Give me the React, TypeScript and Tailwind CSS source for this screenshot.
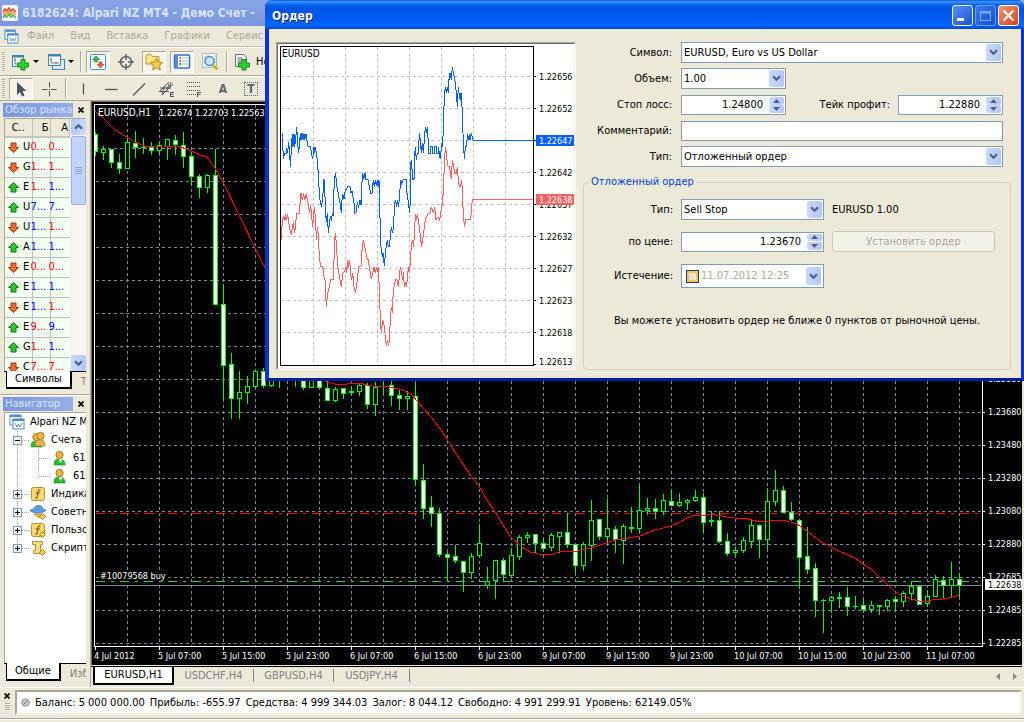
import React from "react";

const UI = "font-['DejaVu_Sans_Condensed','DejaVu_Sans',sans-serif]";
const CHART_FONT = "'DejaVu Sans Condensed', 'DejaVu Sans', sans-serif";

/* [high, body top, body bottom, low, kind]; u = rising, d = falling, n = flat */
type Candle = [number, number, number, number, "u" | "d" | "n"];

const candles: Candle[] = [
  [132, 134, 151, 156, "d"], [146, 149, 152, 160, "u"], [149, 149, 162, 168, "d"], [154, 162, 168, 174, "d"],
  [137, 142, 168, 168, "u"], [131, 143, 147, 158, "d"], [138, 147, 147, 154, "n"], [142, 147, 150, 155, "d"],
  [142, 145, 150, 154, "u"], [139, 139, 146, 160, "u"], [135, 140, 144, 155, "d"], [132, 145, 156, 168, "d"],
  [152, 156, 176, 185, "d"], [174, 176, 187, 198, "d"], [174, 175, 187, 193, "u"], [149, 175, 304, 304, "d"],
  [284, 304, 365, 400, "d"], [353, 364, 398, 419, "d"], [371, 392, 398, 419, "u"], [376, 386, 392, 404, "u"],
  [370, 371, 386, 388, "u"], [368, 371, 385, 388, "d"], [370, 376, 385, 387, "u"], [372, 376, 376, 388, "n"],
  [372, 376, 376, 382, "n"], [372, 376, 376, 387, "n"], [372, 376, 387, 390, "d"], [372, 376, 387, 387, "u"],
  [372, 376, 387, 389, "d"], [379, 388, 400, 400, "d"], [387, 389, 400, 402, "u"], [388, 388, 393, 399, "d"],
  [386, 391, 392, 396, "u"], [383, 385, 391, 396, "u"], [383, 385, 404, 409, "d"], [382, 387, 404, 416, "u"],
  [380, 386, 386, 394, "n"], [380, 385, 395, 406, "d"], [389, 395, 398, 410, "d"], [391, 396, 398, 410, "u"],
  [384, 396, 479, 486, "d"], [464, 480, 508, 519, "d"], [496, 507, 513, 527, "d"], [508, 513, 554, 557, "d"],
  [552, 554, 557, 581, "d"], [545, 556, 560, 563, "d"], [561, 561, 572, 592, "d"], [553, 556, 572, 579, "u"],
  [524, 543, 555, 558, "u"], [567, 581, 585, 589, "u"], [560, 560, 580, 599, "u"], [558, 560, 574, 582, "d"],
  [548, 555, 575, 577, "u"], [535, 537, 556, 560, "u"], [532, 535, 537, 543, "u"], [534, 534, 543, 553, "d"],
  [538, 543, 548, 551, "d"], [533, 535, 547, 551, "u"], [532, 532, 536, 553, "u"], [513, 532, 544, 548, "d"],
  [544, 544, 565, 573, "d"], [542, 544, 565, 571, "u"], [500, 520, 545, 561, "u"], [519, 519, 536, 540, "d"],
  [499, 528, 536, 542, "u"], [526, 529, 539, 553, "d"], [524, 526, 540, 564, "u"], [507, 527, 528, 533, "u"],
  [486, 510, 528, 533, "u"], [498, 508, 510, 515, "u"], [499, 508, 511, 519, "d"], [494, 500, 511, 515, "u"],
  [489, 501, 505, 506, "d"], [493, 502, 505, 507, "u"], [499, 500, 502, 510, "u"], [490, 497, 500, 502, "u"],
  [493, 497, 522, 533, "d"], [511, 520, 521, 526, "u"], [511, 520, 541, 543, "d"], [533, 541, 553, 556, "d"],
  [547, 550, 552, 555, "u"], [537, 540, 550, 553, "u"], [519, 525, 541, 548, "u"], [524, 525, 539, 558, "d"],
  [488, 501, 539, 549, "u"], [470, 490, 501, 506, "u"], [486, 490, 512, 513, "d"], [502, 512, 519, 521, "d"],
  [519, 520, 557, 589, "d"], [527, 556, 569, 574, "d"], [563, 568, 600, 617, "d"], [599, 600, 600, 633, "n"],
  [596, 597, 600, 613, "u"], [592, 597, 598, 608, "u"], [587, 597, 606, 616, "d"], [596, 606, 606, 609, "n"],
  [599, 605, 609, 613, "d"], [601, 605, 609, 613, "u"], [605, 605, 606, 615, "u"], [599, 600, 606, 611, "u"],
  [596, 599, 601, 612, "d"], [591, 593, 601, 607, "u"], [581, 586, 593, 600, "u"], [585, 586, 604, 605, "d"],
  [590, 596, 603, 607, "u"], [575, 579, 596, 597, "u"], [576, 580, 585, 599, "d"], [562, 579, 585, 598, "u"],
  [573, 579, 585, 597, "d"],
];

const average =
  "95,111 103,118 115,130 120,133 135,142 147,147 160,146 180,147 187,149 200,155 207,157 215,168 223,182 240,217 255,248 261,260 268,273 290,330 310,368 320,379 327,382 335,384 347,384 349,383 360,383 367,385 373,386 390,387 403,390 412,395 423,408 431,417 439,427 447,439 455,452 463,464 471,476 479,486 487,500 495,512 503,525 511,537 522,547 530,552 535,553 543,555 553,554 559,552 567,551 578,551 591,548 603,544 615,540 628,538 640,536 655,530 671,526 680,522 687,518 695,515 707,515 710,514 714,514 717,515 727,517 735,518 745,518 759,522 770,521 773,520 787,521 797,524 803,528 813,536 823,543 831,547 839,551 855,558 863,564 871,569 879,577 887,584 895,592 905,597 919,601 925,602 932,600 943,599 953,597 959,595";

const times = [
  "4 Jul 2012", "5 Jul 07:00", "5 Jul 15:00", "5 Jul 23:00", "6 Jul 07:00", "6 Jul 15:00", "6 Jul 23:00",
  "9 Jul 07:00", "9 Jul 15:00", "9 Jul 23:00", "10 Jul 07:00", "10 Jul 15:00", "10 Jul 23:00", "11 Jul 07:00",
];

const prices = ["1.23680", "1.23480", "1.23280", "1.23080", "1.22880", "1.22685", "1.22485", "1.22285"];

const askTicks =
  "35,280 38,280 38,320 41,358 43,340 48,342 50,325 53,340 56,305 59,340 61,380 65,310 67,282 69,320 72,282 74,320 77,300 80,260 83,310 86,340 89,300 91,282 93,300 96,280 100,300 102,282 104,300 108,282 112,310 115,320 122,320 124,340 128,358 132,320 134,340 136,320 139,340 142,360 144,390 146,430 148,450 150,480 153,495 155,500 157,480 160,450 162,418 164,460 166,480 167,520 169,545 172,520 175,580 178,550 181,530 184,538 187,522 190,525 190,480 193,430 196,400 199,420 202,450 205,460 208,480 212,500 214,520 216,480 218,462 222,478 226,450 230,450 232,440 240,440 243,460 246,452 249,470 252,490 255,520 258,515 262,490 266,500 270,480 273,495 275,440 278,400 281,418 285,400 288,418 295,420 298,440 302,460 306,460 310,420 313,440 316,420 319,438 322,420 325,440 327,420 328,480 331,560 333,620 337,650 339,640 343,678 347,630 352,600 355,620 358,620 361,590 364,560 367,580 371,560 373,500 376,480 380,500 383,480 386,500 389,460 392,420 395,430 400,418 409,418 411,460 414,480 419,520 421,480 421,380 424,360 427,400 429,418 432,418 433,360 436,320 439,360 442,340 445,340 448,280 451,300 454,340 457,310 460,340 463,300 466,260 469,280 472,260 475,310 475,340 481,340 481,320 487,320 487,340 493,340 493,320 499,320 499,340 505,340 505,320 508,340 511,358 515,310 518,320 520,260 523,170 526,140 529,160 532,140 535,160 538,100 541,100 544,120 547,80 550,100 553,110 556,130 559,160 562,200 565,140 568,170 571,180 573,160 576,200 579,280 583,358 586,320 590,318 592,282 595,300 598,282 600,300 604,282 607,290 609,301 790,301";

const bidTicks =
  "34,600 37,540 42,530 45,540 46,522 50,540 53,522 56,545 61,575 64,580 68,560 70,545 74,580 78,540 81,520 88,520 91,480 93,460 97,480 101,460 104,480 109,460 112,480 116,500 119,520 122,495 125,530 128,560 131,520 134,500 137,560 140,600 142,560 145,590 148,650 152,680 158,680 162,710 165,720 169,800 173,760 178,740 182,718 190,718 192,660 194,600 196,580 199,610 202,660 205,690 210,720 214,740 218,700 224,695 228,680 230,700 233,660 236,680 239,660 242,700 245,720 248,698 252,740 256,758 260,735 264,700 266,680 273,680 275,640 280,600 284,620 288,640 292,660 295,660 298,680 301,700 304,718 308,700 312,680 316,700 319,680 322,695 325,680 328,750 331,840 334,878 338,840 343,860 346,890 349,918 352,900 356,918 358,900 361,840 364,800 367,820 370,750 374,730 377,718 382,720 385,740 388,710 391,680 395,700 398,720 400,695 403,740 407,730 410,740 413,700 417,680 419,700 421,660 424,620 427,600 431,620 434,560 437,522 440,540 442,522 445,540 450,580 455,620 458,600 462,570 466,540 470,530 475,520 480,520 484,500 490,520 494,500 498,540 504,530 509,540 515,500 518,490 520,440 523,380 526,320 529,340 532,370 535,380 539,380 541,400 544,418 547,360 551,380 554,400 559,400 562,380 565,420 568,440 572,440 574,420 577,440 579,500 583,560 587,538 602,538 605,500 607,479 790,479";

const tickPrices: [string, number][] = [
  ["1.22656", 76], ["1.22652", 108], ["1.22642", 172], ["1.22637", 204], ["1.22632", 236],
  ["1.22627", 268], ["1.22623", 300], ["1.22618", 332], ["1.22613", 361],
];

const range = (n: number) => Array.from({ length: n }, (_, i) => i);

function PriceChart() {
  return (
    <svg className="block h-auto w-full bg-black" viewBox="91 101 931 564" shapeRendering="crispEdges" role="img" aria-label="EURUSD,H1">
      <g stroke="#778899" strokeDasharray="3 3">
        {range(27).map((i) => (
          <line key={i} x1={127.5 + i * 32} x2={127.5 + i * 32} y1={105} y2={646} />
        ))}
        {range(16).map((i) => (
          <line key={i} y1={148.5 + i * 33} y2={148.5 + i * 33} x1={96} x2={982} />
        ))}
      </g>
      <line x1={96} x2={980} y1={513.5} y2={513.5} stroke="#ff0000" strokeDasharray="9 6 3 6" />
      <line x1={96} x2={980} y1={581.5} y2={581.5} stroke="#32cd32" strokeDasharray="9 6 3 6" />
      <line x1={95} x2={982} y1={585.5} y2={585.5} stroke="#778899" />
      {candles.map(([h, t, b, l, kind], i) => {
        const x = 95 + i * 8;
        return (
          <g key={i} stroke="#00ff00">
            <line x1={x + 0.5} x2={x + 0.5} y1={h} y2={l} />
            {kind === "n" ? (
              <line x1={x - 2} x2={x + 3} y1={t + 0.5} y2={t + 0.5} />
            ) : (
              <rect x={x - 1.5} y={t + 0.5} width={4} height={b - t} fill={kind === "d" ? "#ffffff" : "#000000"} />
            )}
          </g>
        );
      })}
      <polyline points={average} fill="none" stroke="#ff0000" />
      <rect x={91} y={101} width={3} height={564} fill="#000000" />
      <path d="M982.5 104.5H94.5V646.5H982.5Z" fill="none" stroke="#ffffff" />
      <rect x={91} y={101} width={931} height={1} fill="#716f64" />
      <rect x={91} y={101} width={1} height={564} fill="#716f64" />
      <g stroke="#ffffff">
        {times.map((t, i) => (
          <line key={t} x1={95.5 + i * 64} x2={95.5 + i * 64} y1={646} y2={650} />
        ))}
        {prices.map((p, i) => (
          <line key={p} x1={982} x2={985} y1={412.5 + i * 33} y2={412.5 + i * 33} />
        ))}
      </g>
      <g fill="#ffffff" fontFamily={CHART_FONT} fontSize={9}>
        {times.map((t, i) => (
          <text key={t} x={94 + i * 64} y={659}>{t}</text>
        ))}
        {prices.map((p, i) => (
          <text key={p} x={988} y={415 + i * 33}>{p}</text>
        ))}
        <text x={988} y={382}>1.23880</text>
        <text x={98} y={116} fontSize={10}>EURUSD,H1</text>
        <text x={159} y={116}>1.22674 1.22703 1.22563</text>
        <rect x={99} y={570} width={68} height={11} fill="#000000" />
        <text x={100} y={579}>#10079568 buy</text>
        <rect x={985} y={579} width={37} height={11} />
        <text x={988} y={588} fill="#000000">1.22638</text>
      </g>
    </svg>
  );
}

function TickChart() {
  return (
    <svg className="block h-auto w-full bg-white" viewBox="278 44 296 324" shapeRendering="crispEdges" role="img" aria-label="EURUSD">
      <g stroke="#c0c0c0" strokeDasharray="3 3">
        {range(7).map((i) => (
          <line key={i} x1={313.5 + i * 32} x2={313.5 + i * 32} y1={47} y2={365} />
        ))}
        {range(9).map((i) => (
          <line key={i} y1={76.5 + i * 32} y2={76.5 + i * 32} x1={281} x2={533} />
        ))}
      </g>
      <g transform="translate(270 40) scale(0.333333)" fill="none">
        <polyline points={bidTicks} stroke="#ff6060" vectorEffect="non-scaling-stroke" />
        <polyline points={askTicks} stroke="#0060ff" vectorEffect="non-scaling-stroke" />
      </g>
      <path d="M280.5 46.5H533.5V365.5H280.5Z" fill="none" stroke="#000000" />
      {range(10).map((i) => (
        <rect key={i} x={534} y={i === 9 ? 364 : 76 + i * 32} width={2} height={1} />
      ))}
      <g fontFamily={CHART_FONT} fontSize={9}>
        <text x={282} y={57} fontSize={10}>EURUSD</text>
        {tickPrices.map(([p, y]) => (
          <text key={p} x={539} y={y + 4}>{p}</text>
        ))}
        <rect x={536} y={135} width={38} height={11} fill="#0060ff" />
        <text x={539} y={144} fill="#ffffff">1.22647</text>
        <rect x={536} y={194} width={38} height={11} fill="#ff6060" />
        <text x={539} y={203} fill="#ffffff">1.22638</text>
      </g>
    </svg>
  );
}

function Chevron() {
  return (
    <svg width="9" height="7" viewBox="0 0 9 7" aria-hidden="true">
      <path d="M1 1.2L4.5 4.7L8 1.2" fill="none" stroke="#4d6185" strokeWidth="2.2" />
    </svg>
  );
}

const arrowBox = "flex items-center justify-center rounded-[2px] bg-linear-to-r from-[#c9d8fc] to-[#b4c8f6]";

function Select({ id, value, wide }: { id: string; value: string; wide?: boolean }) {
  return (
    <div className={wide ? "relative h-[21px] w-full" : "relative h-[21px] w-[105px]"}>
      <select id={id} defaultValue={value} className="h-full w-full appearance-none rounded-none border border-[#7f9db9] bg-white pl-[2px] pr-5 outline-none">
        <option value={value}>{value}</option>
      </select>
      <span className={`${arrowBox} pointer-events-none absolute inset-y-[2px] right-[2px] w-[15px]`}>
        <Chevron />
      </span>
    </div>
  );
}

function Spin({ id, value, wide, active }: { id: string; value: string; wide?: boolean; active?: boolean }) {
  return (
    <div className={`${wide ? "w-full" : "w-[105px]"} flex h-[20px] border border-[#7f9db9] bg-white`}>
      <input id={id} defaultValue={value} className="min-w-0 flex-1 pr-[5px] text-right outline-none" />
      <div className="m-[1px] flex w-[15px] flex-col">
        <button aria-label="Больше" className={`${arrowBox} flex-1`}>
          <svg width="7" height="4" viewBox="0 0 7 4"><path d="M3.5 0L7 4H0Z" fill="#4d6185" /></svg>
        </button>
        <button aria-label="Меньше" className={`${arrowBox} flex-1 ${active ? "border-t border-white" : ""}`}>
          <svg width="7" height="4" viewBox="0 0 7 4"><path d="M3.5 4L0 0H7Z" fill="#4d6185" /></svg>
        </button>
      </div>
    </div>
  );
}

function OrderDialog() {
  const row = "grid grid-cols-[89px_1fr] items-center gap-x-[9px] pr-2";
  const winBtn = "flex size-[21px] items-center justify-center rounded-[3px] border";
  return (
    <section role="dialog" aria-label="Ордер" className="absolute left-[265px] right-0 top-0 rounded-t-[7px] border-b-[3px] border-l-[4px] border-r-[3px] border-[#0831d9] border-b-[#001ea0] bg-[#ece9d8]">
      <header className="-ml-[4px] -mr-[3px] flex h-[29px] items-center gap-[2px] rounded-t-[7px] bg-[linear-gradient(to_bottom,#0a51d8_0%,#3a93ff_6%,#0566ec_16%,#0054e3_30%,#0058ee_55%,#0166ff_88%,#0146c8_100%)] pl-[7px] pr-[5px] pt-[2px]">
        <h2 className="flex-1 text-[12px] font-bold text-white [text-shadow:1px_1px_0_#0f1e6b]">Ордер</h2>
        <button aria-label="Свернуть" className={`${winBtn} border-white bg-linear-to-br from-[#5a8df4] to-[#1c50d8]`}>
          <svg width="19" height="19"><rect x="4" y="12" width="7" height="3" fill="#fff" /></svg>
        </button>
        <button aria-label="Развернуть" disabled className={`${winBtn} border-[#6f9df5] bg-linear-to-br from-[#3a78ee] to-[#1450d8]`}>
          <svg width="19" height="19" fill="none" stroke="#7ea9f5"><rect x="4.5" y="5.5" width="10" height="9" /><path d="M4 6.5H15" strokeWidth="2" /></svg>
        </button>
        <button aria-label="Закрыть" className={`${winBtn} border-white bg-linear-to-br from-[#f0936f] to-[#d2401a]`}>
          <svg width="19" height="19"><path d="M4.5 4.5L14.5 14.5M14.5 4.5L4.5 14.5" stroke="#fff" strokeWidth="2.2" /></svg>
        </button>
      </header>
      <div className="flex items-start gap-[7px] pb-2 pl-[7px] pr-[10px] pt-[13px]">
        <div className="w-[300px] shrink-0 border border-[#aca899] border-b-white border-r-white">
          <div className="border border-[#716f64] border-b-[#f1efe2] border-r-[#f1efe2]">
            <TickChart />
          </div>
        </div>
        <form className="flex min-w-0 flex-1 flex-col" onSubmit={(e) => e.preventDefault()}>
          <div className="flex flex-col gap-[5px]">
            <div className={row}>
              <label htmlFor="symbol" className="text-right">Символ:</label>
              <Select id="symbol" value="EURUSD, Euro vs US Dollar" wide />
            </div>
            <div className={row}>
              <label htmlFor="volume" className="text-right">Объем:</label>
              <Select id="volume" value="1.00" />
            </div>
            <div className={`${row} h-[21px]`}>
              <label htmlFor="sl" className="text-right">Стоп лосс:</label>
              <div className="flex items-center">
                <Spin id="sl" value="1.24800" />
                <label htmlFor="tp" className="ml-auto mr-2">Тейк профит:</label>
                <Spin id="tp" value="1.22880" />
              </div>
            </div>
            <div className={`${row} h-[21px]`}>
              <label htmlFor="comment" className="text-right">Комментарий:</label>
              <input id="comment" className="h-[20px] w-full border border-[#7f9db9] bg-white px-1 outline-none" />
            </div>
            <div className={row}>
              <label htmlFor="kind" className="text-right">Тип:</label>
              <Select id="kind" value="Отложенный ордер" wide />
            </div>
          </div>
          <fieldset className="mt-2 h-[195px] rounded-[4px] border border-[#d0d0bf]">
            <legend className="ml-[5px] px-[2px] leading-[14px] text-[#0046d5]">Отложенный ордер</legend>
            <div className="flex flex-col pt-[10px]">
              <div className="grid grid-cols-[89px_143px_1fr] items-center gap-x-[8px]">
                <label htmlFor="pending" className="text-right">Тип:</label>
                <Select id="pending" value="Sell Stop" wide />
                <span>EURUSD 1.00</span>
              </div>
              <div className="mt-[11px] grid grid-cols-[89px_143px_1fr] items-center gap-x-[8px] pr-[15px]">
                <label htmlFor="price" className="text-right">по цене:</label>
                <Spin id="price" value="1.23670" wide active />
                <button disabled className="h-[21px] rounded-[3px] border border-[#c9c7ba] bg-[#f2f1e8] text-[#a8a490] [text-shadow:1px_1px_0_#fff]">Установить ордер</button>
              </div>
              <div className="mt-3 grid grid-cols-[89px_143px] items-center gap-x-[8px]">
                <label htmlFor="expiry" className="text-right">Истечение:</label>
                <div className="flex h-6 items-center border border-[#7f9db9] bg-white pl-1 pr-[2px]">
                  <input type="checkbox" aria-label="Включить истечение" className="size-[13px] appearance-none border border-[#1c3c6e] bg-[#e6e4da] shadow-[inset_0_0_0_2px_#f8c648]" />
                  <input id="expiry" disabled defaultValue="11.07.2012 12:25" className="ml-[2px] min-w-0 flex-1 text-[#aca899]" />
                  <button aria-label="Открыть календарь" className={`${arrowBox} h-[18px] w-[15px]`}>
                    <Chevron />
                  </button>
                </div>
              </div>
              <p className="mt-[26px] text-center leading-[14px]">Вы можете установить ордер не ближе 0 пунктов от рыночной цены.</p>
            </div>
          </fieldset>
        </form>
      </div>
    </section>
  );
}

function Windows({ size = 16 }: { size?: number }) {
  return (
    <svg width={size} height={size} viewBox="0 0 16 16" fill="none" className="shrink-0" aria-hidden="true">
      <rect x="1" y="1" width="11" height="10" fill="#fff" stroke="#4a90d0" />
      <rect x="1" y="1" width="11" height="2" fill="#4a90d0" />
      <path d="M3 7l1.5-2L6 7l1.5-2L9 6" stroke="#4a90d0" />
      <rect x="4" y="5" width="11" height="10" fill="#fff" stroke="#4a90d0" />
      <rect x="4" y="5" width="11" height="2" fill="#4a90d0" />
      <path d="M6 9l2 4 1.5-3 1.5 3 2-4" stroke="#4a90d0" />
    </svg>
  );
}

const Plus = () => <path d="M10 7.5h4v3.5h3.5v4H14v3h-4v-3H6.500v-4H10z" fill="#2fd02f" stroke="#158a1c" />;

const Caret = () => (
  <svg width="6" height="3" viewBox="0 0 6 3" aria-hidden="true"><path d="M0 0H6L3 3Z" /></svg>
);

function ToolButton({ label, pressed, caret, children }: { label: string; pressed?: boolean; caret?: boolean; children: React.ReactNode }) {
  return (
    <button
      aria-label={label}
      className={`${caret ? "w-8 gap-[2px]" : "w-6"} flex h-[22px] shrink-0 items-center justify-center border ${
        pressed ? "border-[#aca899] border-b-white border-r-white bg-[#f5f3ea]" : "border-transparent"
      }`}
    >
      <svg width="20" height="20" viewBox="0 0 20 20" fill="none" className="shrink-0" aria-hidden="true">{children}</svg>
      {caret && <Caret />}
    </button>
  );
}

const Grip = () => (
  <span className="mr-1 h-[20px] w-[3px] shrink-0 bg-[repeating-linear-gradient(to_bottom,#aca899_0px,#aca899_1px,#f8f7f0_1px,#f8f7f0_2px)]" />
);
const Sep = () => <span className="mx-[4px] h-[21px] w-[2px] shrink-0 border-l border-r border-[#aca899] border-r-white" />;

function Toolbars() {
  const bar = "flex items-center overflow-hidden border-b border-[#aca899] border-t border-t-white pl-[2px]";
  return (
    <>
      <div className={`${bar} h-[29px]`}>
        <Grip />
        <ToolButton label="Новый график" caret>
          <rect x="1.500" y="3.500" width="11" height="11" fill="#fff" stroke="#3c84c4" />
          <path d="M1 4.500h12" stroke="#3c84c4" strokeWidth="2" />
          <path d="M4 6v6h6M3 8h2M7 11v2" stroke="#687890" />
          <Plus />
        </ToolButton>
        <span className="w-[3px]" />
        <ToolButton label="Профили" caret>
          <rect x="6.500" y="7.500" width="12" height="10" fill="#dcebfa" stroke="#3c84c4" />
          <rect x="2.500" y="2.500" width="12" height="11" fill="#fff" stroke="#3c84c4" />
          <path d="M2 3.500h13" stroke="#3c84c4" strokeWidth="2" />
          <path d="M5 6v5h8M4 7.500h2M10 10v2" stroke="#687890" />
        </ToolButton>
        <Sep />
        <div className="flex gap-1">
          <ToolButton label="Обзор рынка" pressed>
            <rect x="2.500" y="2.500" width="15" height="15" rx="1" fill="#fff" stroke="#3c94d8" />
            <path d="M8 4l3.500 3.500H9.500V10h-3V7.500H4.500z" fill="#36b636" stroke="#188a1c" strokeWidth=".6" />
            <path d="M12.500 16L9 12.500h2V10h3v2.500h2z" fill="#f06030" stroke="#a83008" strokeWidth=".6" />
          </ToolButton>
          <ToolButton label="Окно данных">
            <circle cx="10" cy="10" r="5.500" stroke="#5a646c" strokeWidth="1.500" />
            <path d="M10 2v6M10 12v6M2 10h6M12 10h6" stroke="#5a646c" strokeWidth="1.500" />
          </ToolButton>
          <ToolButton label="Навигатор" pressed>
            <path d="M2 4.500V12h13V4.500H8.500L7 2.500H3z" fill="#fce48c" stroke="#c89a28" />
            <path d="M12.500 6l1.900 4 4.200.5-3.100 3 .8 4.300-3.800-2-3.800 2 .8-4.300-3.100-3 4.200-.5z" fill="#f8cc40" stroke="#b48a1c" />
          </ToolButton>
          <ToolButton label="Терминал" pressed>
            <rect x="2.500" y="3" width="15" height="13" rx="1" fill="#fff" stroke="#2c74c4" strokeWidth="1.500" />
            <rect x="3" y="4" width="3" height="11" fill="#4a90dc" />
            <path d="M7.500 6h1.500M7.500 9h1.500" stroke="#e02020" strokeWidth="1.500" />
            <path d="M7.500 12h1.500" stroke="#202020" strokeWidth="1.500" />
            <path d="M10 6h6M10 9h6M10 12h6" stroke="#a4b8d0" />
          </ToolButton>
          <ToolButton label="Тестер стратегий">
            <rect x="2.500" y="1.500" width="14" height="14" fill="#f8fafc" stroke="#b0b8c0" />
            <path d="M5 4v9M8 3v5M12 4v9M15 3v8" stroke="#98a4b0" strokeDasharray="2 1" />
            <circle cx="9.500" cy="9" r="4.500" fill="#c4e0fa" fillOpacity=".85" stroke="#4a90d0" strokeWidth="1.500" />
            <path d="M13 13l4.500 4.500" stroke="#d8a820" strokeWidth="2.500" />
          </ToolButton>
        </div>
        <Sep />
        <button className="flex h-[22px] shrink-0 items-center gap-1">
          <svg width="20" height="20" viewBox="0 0 20 20" fill="none" aria-hidden="true">
            <path d="M3.500 2.500h8l3 3v9h-11z" fill="#fff" stroke="#607080" />
            <path d="M5.500 6h5M5.500 8h6M5.500 10h4" stroke="#485868" />
            <Plus />
          </svg>
          <span className="whitespace-nowrap">Новый ордер</span>
        </button>
      </div>
      <div className={`${bar} h-[25px]`}>
        <Grip />
        <div className="flex gap-1">
          <ToolButton label="Курсор" pressed>
            <path d="M6 3v13l3-3 2 4.500 2.500-1L11.500 12H15.500z" fill="#4a5664" />
          </ToolButton>
          <ToolButton label="Перекрестие">
            <path d="M10.500 3v5.500M10.500 12v5.500M3 10.500h5.500M12 10.500h5.500M10 10.500h1" stroke="#4a5664" />
          </ToolButton>
        </div>
        <Sep />
        <div className="flex gap-1">
          <ToolButton label="Вертикальная линия"><path d="M10.500 4.500v11" stroke="#4a5664" strokeWidth="1.300" /></ToolButton>
          <ToolButton label="Горизонтальная линия"><path d="M4 10.500h12.500" stroke="#4a5664" strokeWidth="1.300" /></ToolButton>
          <ToolButton label="Трендовая линия"><path d="M4 16.500L16 4.500" stroke="#4a5664" strokeWidth="1.300" /></ToolButton>
          <ToolButton label="Равноудаленный канал">
            <path d="M2 13L12 3M5 16L16 5M3 9h11M2 12.500h10M5 15l3-8M9 13l3-8M12 10l2-7" stroke="#4a5664" />
            <path d="M13.500 13v5M13 13.500h4M13 15.500h3.500M13 17.500h4" stroke="#4a5664" />
          </ToolButton>
          <ToolButton label="Линии Фибоначчи">
            <path d="M2 3.500h14M2 7.500h14M2 11.500h14M2 15.500h9" stroke="#4a5664" strokeDasharray="1 1" />
            <path d="M12.500 13v5M12 13.500h4M12 15.500h3.500" stroke="#4a5664" />
          </ToolButton>
          <button aria-label="Текст" className="flex h-[22px] w-6 items-center justify-center text-[12px] font-bold text-[#5a6674]">A</button>
          <button aria-label="Текстовая метка" className="flex h-[22px] w-6 items-center justify-center text-[12px] font-bold text-[#5a6674]">
            <span className="flex size-[14px] items-center justify-center border border-dotted border-[#5a6674] leading-none">T</span>
          </button>
        </div>
      </div>
    </>
  );
}

function PaneTitle({ children }: { children: string }) {
  return (
    <div className="flex h-[14px] items-center pl-[3px] pr-[3px]">
      <h3 className="h-full w-[70px] overflow-hidden whitespace-nowrap bg-linear-to-r from-[#7a96df] to-[#95aee8] pl-[2px] leading-[13px] text-[#d8e4f8]">{children}</h3>
      <button aria-label="Закрыть панель" className="ml-[5px]">
        <svg width="6" height="6" viewBox="0 0 6 6"><path d="M.5.5l5 5M5.500.5l-5 5" stroke="#000" strokeWidth="1.700" /></svg>
      </button>
    </div>
  );
}

type Quote = [boolean, string, string, boolean, string, boolean];
/* [rising, symbol, bid, bid rising, ask, ask rising] */
const quotes: Quote[] = [
  [false, "U", "0...", false, "0...", false], [false, "G", "1...", false, "1...", false],
  [true, "E", "1...", false, "1...", true], [true, "U", "7...", true, "7...", true],
  [false, "U", "1...", true, "1...", false], [true, "A", "1...", true, "1...", true],
  [false, "E", "0...", false, "0...", false], [true, "E", "1...", true, "1...", true],
  [false, "E", "1...", true, "1...", false], [true, "E", "9...", false, "9...", true],
  [true, "G", "1...", false, "1...", true], [false, "C", "7...", false, "7...", false],
];

const tone = (up: boolean) => (up ? "text-[#0000ff]" : "text-[#ff0000]");

function MarketWatch() {
  const th = "border-r border-[#c5c2b2] p-0 font-normal overflow-hidden";
  return (
    <div className="mx-1 flex h-[253px] overflow-hidden border-l border-t border-[#aca899] bg-white">
      <div className="w-[65px] shrink-0">
        <table className="w-full table-fixed border-collapse">
          <thead>
            <tr className="h-[18px] border-b-2 border-[#cbc7b8] bg-[#ece9d8]">
              <th className={`${th} w-[27px]`}>С..</th>
              <th className={`${th} w-[18px] pr-[1px] text-right`}>Б</th>
              <th className={`${th} pr-[1px] text-right`}>А</th>
            </tr>
          </thead>
          <tbody>
            {quotes.map(([up, sym, bid, bidUp, ask, askUp], i) => (
              <tr key={i} className="h-5 border-b border-[#c0c0c0] bg-[#f0fff0]">
                <td className="border-r border-[#c0c0c0] p-0">
                  <div className="flex items-center gap-1 pl-[3px]">
                    <svg width="11" height="11" viewBox="0 0 11 11" className="shrink-0" aria-hidden="true">
                      {up ? (
                        <path d="M5.500.5L10.500 5.500H8V10H3V5.500H.5z" fill="#2fc42f" stroke="#157a1c" />
                      ) : (
                        <path d="M5.500 10.500L.5 5.500H3V1H8V5.500H10.500z" fill="#f06838" stroke="#a03410" />
                      )}
                    </svg>
                    {sym}
                  </div>
                </td>
                <td className={`border-r border-[#c0c0c0] p-0 ${tone(bidUp)}`}><span className="-ml-[2px]">{bid}</span></td>
                <td className={`p-0 ${tone(askUp)}`}><span className="-ml-[2px]">{ask}</span></td>
              </tr>
            ))}
          </tbody>
        </table>
      </div>
      <div className="flex flex-1 flex-col items-center bg-[#f6f5f1]">
        <button aria-label="Вверх" className={`${arrowBox} h-4 w-[15px] rotate-180`}><Chevron /></button>
        <div className="mt-[1px] flex h-[69px] w-[15px] items-center justify-center rounded-[2px] border border-[#98b0e8] bg-[#c3d3fd]">
          <svg width="7" height="8"><path d="M0 .5h7M0 2.500h7M0 4.500h7M0 6.500h7" stroke="#8ca4e0" /></svg>
        </div>
        <button aria-label="Вниз" className={`${arrowBox} mt-auto h-4 w-[15px]`}><Chevron /></button>
      </div>
    </div>
  );
}

function PaneTabs({ active, other }: { active: string; other: string }) {
  return (
    <div className="mx-1 flex h-[19px] shrink-0 overflow-hidden">
      <span className="w-[2px] border-t border-black" />
      <button className="h-[18px] border-b-2 border-l border-r-2 border-black bg-white px-[8px] leading-[16px]">{active}</button>
      <button className="flex-1 overflow-hidden whitespace-nowrap border-t border-black pl-[9px] text-left leading-[17px] text-[#808080]">{other}</button>
    </div>
  );
}

function Person({ x = 0, body = "#28c028" }: { x?: number; body?: string }) {
  return (
    <g transform={`translate(${x} 0)`}>
      <path d="M1 15c0-5 2-6 5-6s6 1 6 6z" fill={body} stroke="#157a1c" strokeWidth=".6" />
      <path d="M5.500 9l2 4 2-3.500z" fill="#fff" />
      <circle cx="6.500" cy="5" r="3.600" fill="#f0b840" stroke="#a87418" />
    </g>
  );
}

const fSquare = (
  <>
    <rect x="1.500" y="1.500" width="13" height="13" rx="2" fill="#f8d870" stroke="#b8902c" />
    <path d="M10.500 4C8.500 3.500 8 5 7.800 7L7.200 10.500C7 12 6.500 12.500 5.200 12M5.500 7h4.500" fill="none" stroke="#7a5c10" strokeWidth="1.200" />
  </>
);
const gem = <path d="M12.500 9.500l3 3-3 3-3-3z" fill="#f8d050" stroke="#a88020" />;

const icons: Record<string, React.ReactNode> = {
  people: <><Person /><g transform="translate(4 -1)"><path d="M1 15c0-5 2-6 5-6s5 1 5 6z" fill="#e8b448" stroke="#98701c" strokeWidth=".6" /><circle cx="6.500" cy="5" r="3.600" fill="#f0b840" stroke="#a87418" /></g></>,
  person: <Person x={1} />,
  f: fSquare,
  hat: <><path d="M0 6c2 4 13 4 16 0-2 0-3-1-4-3-1-2-6-2-7 0C4 5 2 6 0 6z" fill="#5a9ce0" stroke="#2c64a8" strokeWidth=".7" /><path d="M4 10l5 4 3-4z" fill="#f0b840" stroke="#a87418" strokeWidth=".6" />{gem}</>,
  fgem: <>{fSquare}{gem}</>,
  scroll: <><path d="M2.500 1.500h10v3h-2v6h2v3h-9v-3h2v-6h-3z" fill="#f8dc80" stroke="#b8902c" />{gem}</>,
};

type Node = { text: string; icon: string; level: 1 | 2; sign?: "+" | "-"; last?: boolean };
const nodes: Node[] = [
  { text: "Счета", icon: "people", level: 1, sign: "-" },
  { text: "6182624", icon: "person", level: 2 },
  { text: "6182623", icon: "person", level: 2, last: true },
  { text: "Индикаторы", icon: "f", level: 1, sign: "+" },
  { text: "Советники", icon: "hat", level: 1, sign: "+" },
  { text: "Пользовательские", icon: "fgem", level: 1, sign: "+" },
  { text: "Скрипты", icon: "scroll", level: 1, sign: "+", last: true },
];

function Navigator() {
  return (
    <div className="mx-1 flex-1 overflow-hidden border-l border-t border-[#aca899] bg-white">
      <ul>
        <li className="flex h-[18px] items-center gap-[5px] whitespace-nowrap pl-1"><Windows /> Alpari NZ MT4</li>
        {nodes.map((n) => (
          <li key={n.text} className="flex h-[18px] items-center gap-[5px] whitespace-nowrap">
            <span className="flex shrink-0">
              <svg width={n.level === 1 ? 25 : 47} height="18" shapeRendering="crispEdges" aria-hidden="true">
                <g stroke="#aca899" strokeDasharray="1 1" fill="none">
                  <path d={n.level === 1 && n.last ? "M12.500 0V9" : "M12.500 0V18"} />
                  {n.level === 1 ? <path d="M13 9.500H24" /> : <path d={n.last ? "M33.500 0V9M34 9.500H45" : "M33.500 0V18M34 9.500H45"} />}
                </g>
                {n.sign && (
                  <>
                    <rect x="8.500" y="5.500" width="8" height="8" fill="#f4f2ea" stroke="#7f9db9" />
                    <path d={n.sign === "+" ? "M10 9.500h5M12.500 7v5" : "M10 9.500h5"} stroke="#000" />
                  </>
                )}
              </svg>
              <svg width="16" height="18" viewBox="0 -1 16 18" className="overflow-visible" aria-hidden="true">{icons[n.icon]}</svg>
            </span>
            {n.text}
          </li>
        ))}
      </ul>
    </div>
  );
}

export default function App() {
  const chartTab = "h-[18px] border-r text-center [border-image:linear-gradient(to_bottom,transparent_15%,#808080_15%,#808080_80%,transparent_80%)_1]";
  return (
    <main className={`${UI} relative flex min-h-screen flex-col overflow-hidden bg-[#ece9d8] text-[11px] leading-[14px] text-black`}>
      <header className="flex h-[26px] items-center gap-1 bg-linear-to-b from-[#8aa4e6] to-[#7a96df] pl-[2px]">
        <svg width="16" height="16" viewBox="0 0 16 16" fill="none" aria-hidden="true">
          <rect width="16" height="16" rx="2" fill="#f4f6fa" />
          <path d="M1 7l2-3 2 2 2-3 2 3 2-2 3 3" stroke="#e04830" strokeWidth="1.500" />
          <path d="M1 10l2-3 2 2 2-3 2 3 2-2 3 3" stroke="#f0a030" strokeWidth="1.500" />
          <path d="M1 13l2-3 2 2 2-3 2 3 2-2 3 3" stroke="#50b050" strokeWidth="1.500" />
        </svg>
        <h1 className="whitespace-nowrap text-[12px] font-bold text-[#d8e4f8]">6182624: Alpari NZ MT4 - Демо Счет -</h1>
      </header>
      <nav className="flex h-[21px] items-center gap-4 border-b border-[#c5c2b2] pl-1 text-[#aca899]">
        <span className="-mr-2"><Windows size={15} /></span>
        <a href="#file">Файл</a>
        <a href="#view">Вид</a>
        <a href="#insert">Вставка</a>
        <a href="#charts">Графики</a>
        <a href="#tools">Сервис</a>
      </nav>
      <Toolbars />
      <div className="flex flex-1">
        <aside className="flex w-[91px] shrink-0 flex-col border-r border-[#aca899] pt-[2px]">
          <PaneTitle>Обзор рынка</PaneTitle>
          <div className="h-[1px]" />
          <MarketWatch />
          <PaneTabs active="Символы" other="Тиковый" />
          <div className="mt-1 h-[2px] border-b border-t border-[#aca899] border-b-white" />
          <div className="h-[1px]" />
          <PaneTitle>Навигатор</PaneTitle>
          <div className="h-[1px]" />
          <Navigator />
          <PaneTabs active="Общие" other="Избранное" />
          <div className="h-[5px]" />
        </aside>
        <section className="flex min-w-0 flex-1 flex-col pr-[2px]">
          <PriceChart />
          <div className="mt-[1px] flex h-[20px] items-start border-t border-black pl-[2px] text-[#808080]">
            <button className="h-[18px] w-[81px] shrink-0 border-b-2 border-l-2 border-r-2 border-black bg-white text-black">EURUSD,H1</button>
            <button className={`${chartTab} w-[80px]`}>USDCHF,H4</button>
            <button className={`${chartTab} w-[80px]`}>GBPUSD,H4</button>
            <button className={`${chartTab} w-[76px]`}>USDJPY,H4</button>
            <div className="ml-auto flex h-[18px] items-center gap-[13px] pr-[5px]">
              <button aria-label="Назад"><svg width="4" height="7"><path d="M4 0V7L0 3.500z" fill="#808890" /></svg></button>
              <button aria-label="Вперед"><svg width="4" height="7"><path d="M0 0V7L4 3.500z" fill="#808890" /></svg></button>
            </div>
          </div>
        </section>
      </div>
      <footer>
        <div className="flex h-[31px] gap-[5px] border-t border-white pr-[2px] pt-[2px]">
          <div className="flex w-[10px] shrink-0 flex-col items-end gap-1 pt-[3px]">
            <button aria-label="Закрыть терминал">
              <svg width="6" height="6" viewBox="0 0 6 6"><path d="M.5.5l5 5M5.500.5l-5 5" stroke="#000" strokeWidth="1.700" /></svg>
            </button>
            <span className="h-[8px] w-[5px] bg-[repeating-linear-gradient(to_bottom,#aca899_0px,#aca899_1px,#f8f7f0_1px,#f8f7f0_2px)]" />
          </div>
          <div className="flex h-[25px] flex-1 items-center gap-[5px] border-2 border-[#aca899] border-b-[#f1efe2] border-r-[#f1efe2] bg-white pl-1">
            <svg width="9" height="9" viewBox="0 0 9 9" aria-hidden="true"><circle cx="4.500" cy="4.500" r="3.800" fill="#c8c8c4" stroke="#909090" /><path d="M2.500 6.500l4-4" stroke="#707070" /></svg>
            <p className="flex flex-wrap gap-x-[5px]">
              <span>Баланс: 5 000 000.00</span>
              <span>Прибыль: -655.97</span>
              <span>Средства: 4 999 344.03</span>
              <span>Залог: 8 044.12</span>
              <span>Свободно: 4 991 299.91</span>
              <span>Уровень: 62149.05%</span>
            </p>
          </div>
        </div>
        <div className="h-[4px] border-t border-[#aca899] shadow-[inset_0_1px_0_#fff]" />
      </footer>
      <OrderDialog />
    </main>
  );
}
